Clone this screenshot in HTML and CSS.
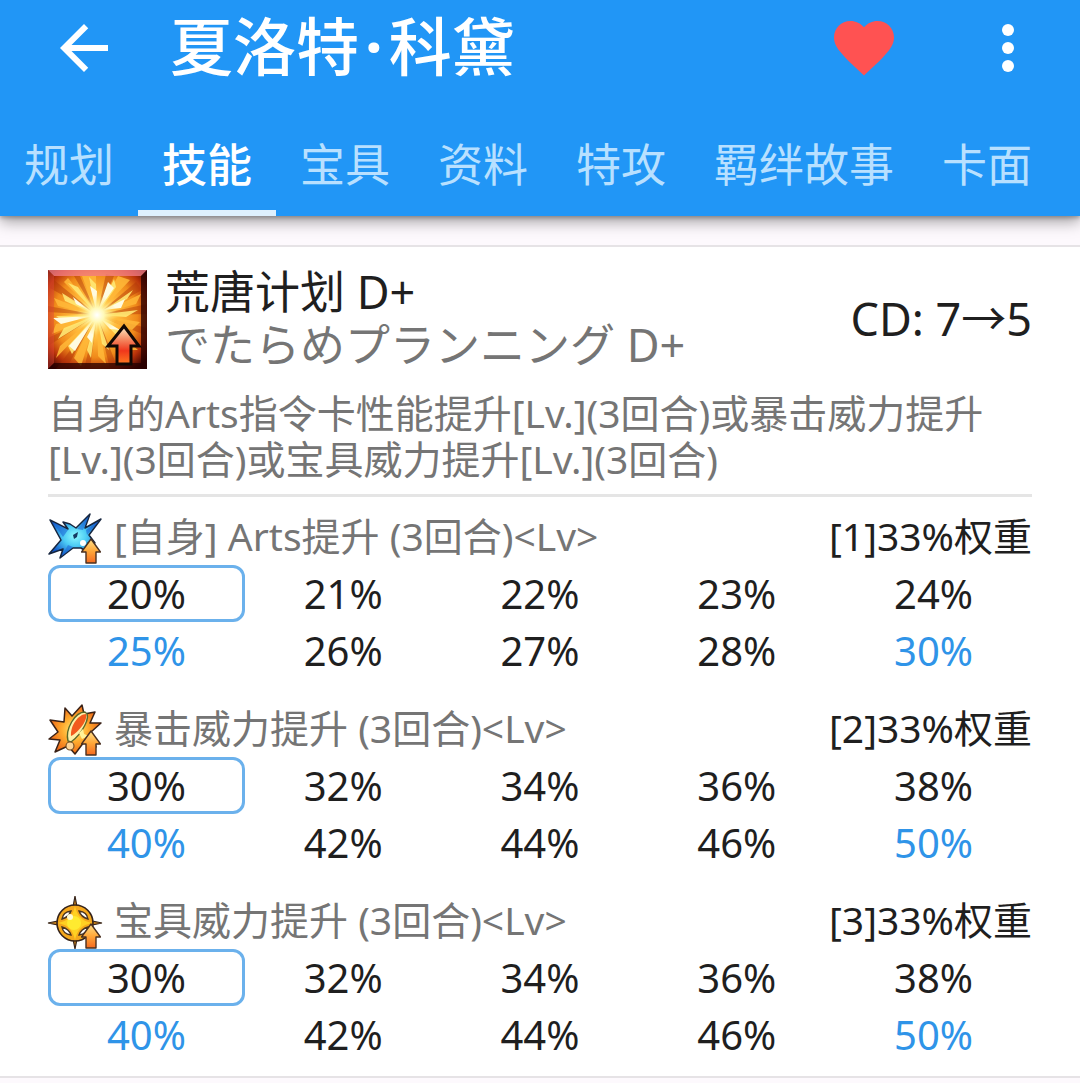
FILE: index.html
```html
<!DOCTYPE html>
<html lang="zh-CN">
<head>
    <meta charset="UTF-8">
    <meta name="viewport" content="width=device-width, initial-scale=1.0">
    <title>夏洛特·科黛</title>
    <link rel="stylesheet" href="styles.css">
</head>
<body>
    <svg class="defs" aria-hidden="true">
        <defs>
            <linearGradient id="arrowFill" x1="0" y1="0" x2="0" y2="1">
                <stop offset="0" stop-color="#ffe08a"/>
                <stop offset="0.5" stop-color="#ffa83a"/>
                <stop offset="1" stop-color="#f56a20"/>
            </linearGradient>
            <symbol id="up" viewBox="0 0 20 26">
                <path d="M10 1 L19.500 14 H15 V25 H5 V14 H0.500 Z" fill="url(#arrowFill)" stroke="#4a3020" stroke-width="1.400" stroke-linejoin="round"/>
            </symbol>
        </defs>
    </svg>

    <header class="app-bar">
        <div class="toolbar">
            <button class="icon-btn" aria-label="返回">
                <svg viewBox="0 0 24 24" fill="#fff"><path d="M20 11H7.830l5.590-5.590L12 4l-8 8 8 8 1.410-1.410L7.830 13H20v-2z"/></svg>
            </button>
            <h1>夏洛特<span class="dot">·</span>科黛</h1>
            <button class="icon-btn" aria-label="收藏">
                <svg viewBox="0 0 24 24" fill="#ff5252"><path d="M12 21.200C10.500 19.800 6 15.800 4 13.200 2.600 11.400 2 10 2 8.500 2 5.400 4.400 3 7.500 3c1.740 0 3.410.810 4.500 2.090C13.090 3.810 14.760 3 16.500 3 19.600 3 22 5.400 22 8.500c0 1.500-.6 2.900-2 4.700-2 2.600-6.500 6.600-8 8z"/></svg>
            </button>
            <button class="icon-btn" aria-label="更多">
                <svg viewBox="0 0 24 24" fill="#fff"><circle cx="12" cy="6" r="2"/><circle cx="12" cy="12" r="2"/><circle cx="12" cy="18" r="2"/></svg>
            </button>
        </div>
        <nav class="tabs" role="tablist">
            <button class="tab" role="tab">规划</button>
            <button class="tab active" role="tab" aria-selected="true">技能</button>
            <button class="tab" role="tab">宝具</button>
            <button class="tab" role="tab">资料</button>
            <button class="tab" role="tab">特攻</button>
            <button class="tab" role="tab">羁绊故事</button>
            <button class="tab" role="tab">卡面</button>
        </nav>
    </header>

    <main class="card">
        <div class="skill-head">
            <svg class="skill-icon" viewBox="0 0 99 99">
                <defs>
                    <radialGradient id="burst" cx="0.480" cy="0.460" r="0.680">
                        <stop offset="0" stop-color="#fff6a0"/>
                        <stop offset="0.350" stop-color="#ffb83a"/>
                        <stop offset="0.620" stop-color="#f08a1a"/>
                        <stop offset="0.820" stop-color="#b8320a"/>
                        <stop offset="1" stop-color="#3a0000"/>
                    </radialGradient>
                    <radialGradient id="core">
                        <stop offset="0" stop-color="#fff"/>
                        <stop offset="0.350" stop-color="#fff9b8"/>
                        <stop offset="1" stop-color="#ffe060" stop-opacity="0"/>
                    </radialGradient>
                    <linearGradient id="redArrow" x1="0" y1="0" x2="0" y2="1">
                        <stop offset="0" stop-color="#fff0c8"/>
                        <stop offset="0.350" stop-color="#f58a62"/>
                        <stop offset="0.650" stop-color="#f0371c"/>
                        <stop offset="1" stop-color="#ff7a20"/>
                    </linearGradient>
                </defs>
                <rect width="99" height="99" fill="url(#burst)"/>
                <path fill="#b03408" opacity="0.450" d="M49 45L6 10 2 18ZM49 45L32 6 26 6ZM49 45L58 4 66 6ZM49 45L88 12 94 20ZM49 45L99 34 99 44ZM49 45L99 58 99 66ZM49 45L70 99 62 99ZM49 45L42 99 36 99ZM49 45L18 99 8 99ZM49 45L0 76 0 68ZM49 45L0 42 0 36Z"/>
                <path fill="#ffb838" opacity="0.850" d="M49 45L16 12 20 8ZM49 45L34 6 48 6ZM49 45L70 6 82 10ZM49 45L93 24 88 34ZM49 45L92 52 84 60ZM49 45L90 80 76 80ZM49 45L58 94 50 86ZM49 45L33 96 26 88ZM49 45L8 88 12 76ZM49 45L4 64 8 54ZM49 45L6 28 10 36Z"/>
                <path fill="#ffe873" opacity="0.900" d="M49 45L20 13 30 17ZM49 45L41 7 48 14ZM49 45L66 9 68 17ZM49 45L85 20 79 29ZM49 45L90 40 78 47ZM49 45L82 67 70 67ZM49 45L61 80 54 74ZM49 45L43 88 39 80ZM49 45L24 84 20 76ZM49 45L10 69 16 58ZM49 45L8 46 15 51ZM49 45L14 23 17 31Z"/>
                <path fill="#fffbe0" d="M46 49L27 81 21 76ZM44 46L13 54 5 48ZM50 41L60 12 66 18ZM55 40L77 29 73 38ZM48 40L42 16 49 21ZM53 49L72 60 62 59ZM42 41L25 27 28 34ZM48 50L44 73 39 67Z"/>
                <circle cx="49" cy="45" r="20" fill="url(#core)"/>
                <path fill="#f4808a" opacity="0.750" d="M0 0H99L93 6H6Z"/>
                <path fill="#e04a38" opacity="0.450" d="M0 0L6 6V93L0 99Z"/>
                <path fill="#250000" opacity="0.750" d="M99 0V99H0L6 93H93V6Z"/>
                <path d="M76 56L91 76H83V94H69V76H60Z" fill="url(#redArrow)" stroke="#120804" stroke-width="3"/>
            </svg>
            <div class="skill-names">
                <h2>荒唐计划 D+</h2>
                <p lang="ja">でたらめプランニング D+</p>
            </div>
            <div class="cooldown">CD: 7→5</div>
        </div>
        <p class="detail">自身的Arts指令卡性能提升[Lv.](3回合)或暴击威力提升[Lv.](3回合)或宝具威力提升[Lv.](3回合)</p>

        <section class="effect">
            <div class="effect-head">
                <svg class="effect-icon" viewBox="0 0 54 54">
                    <defs>
                        <radialGradient id="arts">
                            <stop offset="0" stop-color="#8ffaff"/>
                            <stop offset="0.450" stop-color="#4cccf5"/>
                            <stop offset="1" stop-color="#1157c8"/>
                        </radialGradient>
                    </defs>
                    <path d="M2 7L20 16 15 9 22 11 28 15 42 1 37 15 53 6 41 22 47 30 40 30 46 43 33 35 25 35 12 45 15 36 1 41 13 27Z" fill="url(#arts)" stroke="#17263f" stroke-width="1.500" stroke-linejoin="round"/>
                    <path d="M5 9L20 17 15 24ZM41 3L29 16 35 17ZM14 43L20 32 25 34ZM51 8L38 17 39 22Z" fill="#1c67d6" opacity="0.600"/>
                    <path d="M25 22L30 19 29 24 26 26Z" fill="#153a63"/>
                    <circle cx="35" cy="30" r="3" fill="#fff"/>
                    <use href="#up" x="33" y="25" width="20" height="26"/>
                </svg>
                <h3>[自身] Arts提升 (3回合)&lt;Lv&gt;</h3>
                <span class="weight">[1]33%权重</span>
            </div>
            <table class="values">
                <tr><td class="current">20%</td><td>21%</td><td>22%</td><td>23%</td><td>24%</td></tr>
                <tr><td class="key">25%</td><td>26%</td><td>27%</td><td>28%</td><td class="key">30%</td></tr>
            </table>
        </section>

        <section class="effect">
            <div class="effect-head">
                <svg class="effect-icon" viewBox="0 0 54 54">
                    <defs>
                        <radialGradient id="crit">
                            <stop offset="0" stop-color="#fff07a"/>
                            <stop offset="0.500" stop-color="#ffab2e"/>
                            <stop offset="1" stop-color="#ee6a18"/>
                        </radialGradient>
                    </defs>
                    <path d="M17 3L24 11 34 0 36 9 47 7 42 18 53 18 43 27 48 42 36 37 27 49 20 41 7 47 12 35 1 34 10 27 2 15 16 17Z" fill="url(#crit)" stroke="#3a2217" stroke-width="1.500" stroke-linejoin="round"/>
                    <path d="M20 36C17 24 27 7 37 7 44 11 34 29 23 37Z" fill="#fff0a8" stroke="#59682a" stroke-width="1.400"/>
                    <path d="M23 31C22 20 31 9 38 9 40 15 31 27 23 31Z" fill="#f25a1d"/>
                    <circle cx="22" cy="41" r="4" fill="#ffd79a" stroke="#765027" stroke-width="1.200"/>
                    <path d="M31 28L35 24 36 29 41 31 34 34Z" fill="#fff39a"/>
                    <use href="#up" x="33" y="25" width="20" height="26"/>
                </svg>
                <h3>暴击威力提升 (3回合)&lt;Lv&gt;</h3>
                <span class="weight">[2]33%权重</span>
            </div>
            <table class="values">
                <tr><td class="current">30%</td><td>32%</td><td>34%</td><td>36%</td><td>38%</td></tr>
                <tr><td class="key">40%</td><td>42%</td><td>44%</td><td>46%</td><td class="key">50%</td></tr>
            </table>
        </section>

        <section class="effect">
            <div class="effect-head">
                <svg class="effect-icon" viewBox="0 0 54 54">
                    <path d="M27 -1L29 10H25ZM27 52L29 42H25ZM0 26L10 24V28ZM54 26L44 24V28Z" fill="#c9821c" stroke="#35231a" stroke-width="1.200"/>
                    <circle cx="27" cy="26" r="18" fill="#f5a81c" stroke="#35231a" stroke-width="1.600"/>
                    <path d="M27 9C29 19 34 24 44 26 34 28 29 33 27 43 25 33 20 28 10 26 20 24 25 19 27 9Z" fill="#ffd022"/>
                    <path d="M14 22Q15 15 23 14 21 20 14 22ZM40 22Q39 15 31 14 33 20 40 22ZM14 30Q15 37 23 38 21 32 14 30ZM40 30Q39 37 31 38 33 32 40 30Z" fill="#fff" stroke="#4a3520" stroke-width="1.400"/>
                    <circle cx="26" cy="26" r="7" fill="#ffea30"/>
                    <circle cx="22" cy="20" r="3" fill="#fffbd0"/>
                    <use href="#up" x="33" y="26" width="20" height="26"/>
                </svg>
                <h3>宝具威力提升 (3回合)&lt;Lv&gt;</h3>
                <span class="weight">[3]33%权重</span>
            </div>
            <table class="values">
                <tr><td class="current">30%</td><td>32%</td><td>34%</td><td>36%</td><td>38%</td></tr>
                <tr><td class="key">40%</td><td>42%</td><td>44%</td><td>46%</td><td class="key">50%</td></tr>
            </table>
        </section>
    </main>
</body>
</html>
```

FILE: styles.css
```css
* {
    margin: 0;
    padding: 0;
    box-sizing: border-box;
}

body {
    font-family: 'Noto Sans', 'Noto Sans CJK SC', sans-serif;
    background: #fdf9fd;
    color: #1f1f1f;
}

.defs {
    position: absolute;
    width: 0;
    height: 0;
}

/* App bar */
.app-bar {
    position: relative;
    background: #2196f6;
    box-shadow: 0 6px 14px rgba(0, 0, 0, 0.35), 0 2px 4px rgba(0, 0, 0, 0.25);
}

.toolbar {
    display: flex;
    align-items: center;
    height: 96px;
    padding: 0 36px 0 48px;
    margin-bottom: 24px;
}

.toolbar h1 {
    flex: 1;
    padding: 0 0 4px 50px;
    font-size: 63px;
    font-weight: 500;
    line-height: 86px;
    color: #fff;
    white-space: nowrap;
}

.dot {
    padding: 0 6px;
    font-weight: 700;
}

.icon-btn {
    display: flex;
    width: 72px;
    height: 72px;
    border: none;
    background: none;
    cursor: pointer;
}

.icon-btn + .icon-btn {
    margin-left: 72px;
}

.icon-btn svg {
    width: 100%;
    height: 100%;
}

.tabs {
    display: flex;
    overflow: hidden;
}

.tab {
    flex: none;
    height: 96px;
    padding: 0 24px;
    border: none;
    border-bottom: 6px solid transparent;
    background: none;
    font-family: inherit;
    font-size: 45px;
    font-weight: 400;
    line-height: 90px;
    color: #b8e0ff;
    cursor: pointer;
}

.tab.active {
    font-weight: 500;
    color: #fff;
    border-bottom-color: #def0fe;
}

/* Skill card */
.card {
    margin-top: 29px;
    padding: 22px 48px 3px;
    background: #fff;
    border-top: 2px solid #e6e3e6;
    border-bottom: 2px solid #e6e3e6;
}

.skill-head {
    display: flex;
    align-items: center;
    height: 100px;
}

.skill-icon {
    flex: none;
    width: 99px;
    height: 99px;
}

.skill-names {
    flex: 1;
    padding: 0 0 2px 18px;
}

.skill-names h2,
.skill-names p {
    font-size: 45px;
    font-weight: 400;
    line-height: 53px;
}

.skill-names p {
    font-family: 'Noto Sans', 'Noto Sans CJK JP', sans-serif;
    color: #757575;
}

.cooldown {
    padding-bottom: 6px;
    font-size: 45px;
}

.detail {
    padding: 21px 0 12px;
    border-bottom: 3px solid #e5e5e5;
    font-size: 39px;
    line-height: 46px;
    color: #757575;
}

.effect {
    padding-top: 16px;
    padding-bottom: 10px;
}

.effect-head {
    display: flex;
    align-items: flex-start;
    height: 52px;
}

.effect-icon {
    flex: none;
    width: 54px;
    height: 54px;
    overflow: visible;
}

.effect-head h3 {
    flex: 1;
    padding-left: 12px;
    font-size: 39px;
    font-weight: 400;
    line-height: 46px;
    color: #757575;
}

.weight {
    font-size: 39px;
    line-height: 46px;
}

.values {
    width: 100%;
    table-layout: fixed;
    border-collapse: separate;
    border-spacing: 0;
}

.values td {
    height: 57px;
    border: 3px solid transparent;
    border-radius: 12px;
    font-size: 40px;
    line-height: 50px;
    text-align: center;
}

.values .current {
    border-color: #6bb1ec;
}

.values .key {
    color: #2f94e8;
}
```
